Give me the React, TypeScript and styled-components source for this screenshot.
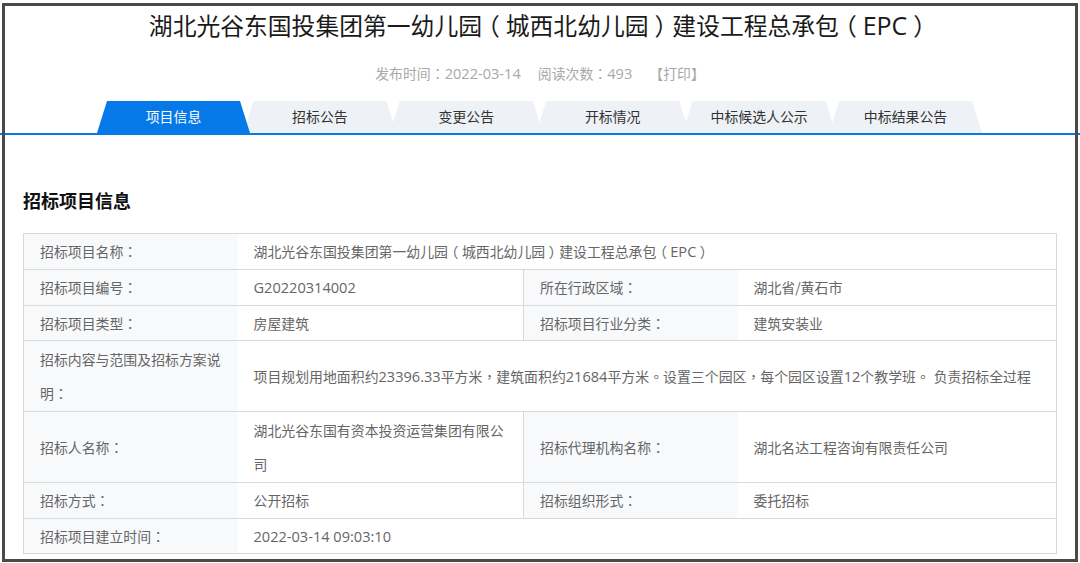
import React from "react";
import styled, { createGlobalStyle } from "styled-components";

const Global = createGlobalStyle`
  html, body { margin: 0; padding: 0; background: #fff; }
  body { width: 1080px; height: 563px; overflow: hidden; font-family: "Noto Sans CJK SC", "Liberation Sans", sans-serif; }
`;

const Frame = styled.div`
  box-sizing: border-box;
  width: 1076px;
  height: 559px;
  margin: 3px 0 0 2px;
  border: 3px solid #4a4a4a;
  background: #fff;
  position: relative;
  &::before,
  &::after {
    content: "";
    position: absolute;
    top: 127px;
    width: 2px;
    height: 2px;
    background: #0679e8;
  }
  &::before {
    left: -5px;
  }
  &::after {
    right: -5px;
  }
`;

const Title = styled.h1`
  margin: 0;
  height: 43px;
  line-height: 38px;
  font-size: 23.8px;
  font-weight: 400;
  color: #1a1a1a;
  text-align: center;
  white-space: nowrap;
`;

const Meta = styled.div`
  display: flex;
  justify-content: center;
  gap: 17px;
  height: 52px;
  padding-top: 12px;
  box-sizing: border-box;
  font-size: 13.9px;
  line-height: 24px;
  color: #a8a8a8;
`;

const TabBar = styled.nav`
  display: flex;
  height: 32px;
  padding-left: 92px;
  box-shadow: 0 2px 0 #0679e8;
`;

const Tab = styled.a<{ $active?: boolean }>`
  flex: none;
  width: 153px;
  margin-right: -6.6px;
  height: 32px;
  line-height: 31px;
  text-align: center;
  font-size: 13.9px;
  color: ${(p) => (p.$active ? "#fff" : "#333")};
  background: ${(p) => (p.$active ? "#0679e8" : "#eef1f5")};
  clip-path: polygon(10px 0, 143px 0, 153px 100%, 0 100%);
  position: relative;
  z-index: ${(p) => (p.$active ? 1 : 0)};
`;

const Section = styled.h2`
  margin: 0;
  padding: 44px 0 0 18px;
  height: 100px;
  box-sizing: border-box;
  font-size: 18px;
  line-height: 46px;
  font-weight: 700;
  color: #111;
`;

const Table = styled.table`
  margin-left: 18px;
  width: 1034px;
  border-collapse: collapse;
  table-layout: fixed;
  font-size: 13.9px;
  color: #666;
`;

const Row = styled.tr<{ $h: number }>`
  height: ${(p) => p.$h}px;
`;

const Label = styled.th<{ $tall?: boolean }>`
  box-sizing: border-box;
  border: 1px solid #d9d9d9;
  border-right: none;
  padding: 0 16px;
  background: #f8f9fb;
  font-weight: 400;
  text-align: left;
  line-height: ${(p) => (p.$tall ? 34.5 : 33)}px;
`;

const Value = styled.td<{ $tall?: boolean }>`
  box-sizing: border-box;
  border: 1px solid #d9d9d9;
  border-left: none;
  padding: 0 15px 0 16px;
  line-height: ${(p) => (p.$tall ? 34.5 : 33)}px;
`;

const Latin = styled.span`
  font-family: "Open Sans", "Liberation Sans", sans-serif;
  font-size: 1.05em;
`;

const Punct = styled.span`
  font-family: "Noto Sans CJK TC", sans-serif;
`;

const Paren = styled.span`
  padding: 0 0.25em;
  font-feature-settings: "halt";
`;

function Txt({ children }: { children: string }) {
  const parts = children.match(/[A-Za-z0-9.:\- ]+|[：，。]|（|）|[^A-Za-z0-9.:\- ：，。（）]+/g) ?? [];
  return (
    <>
      {parts.map((s, i) => {
        if (s === "（" || s === "）") return <Paren key={i}>{s}</Paren>;
        if (/^[：，。]$/.test(s)) return <Punct key={i}>{s}</Punct>;
        if (/^[A-Za-z0-9.:\- ]+$/.test(s)) return <Latin key={i}>{s}</Latin>;
        return <React.Fragment key={i}>{s}</React.Fragment>;
      })}
    </>
  );
}

const TITLE = "湖北光谷东国投集团第一幼儿园（城西北幼儿园）建设工程总承包（EPC）";

export default function App() {
  return (
    <Frame>
      <Global />
      <Title><Txt>{TITLE}</Txt></Title>
      <Meta>
        <span><Txt>发布时间：2022-03-14</Txt></span>
        <span><Txt>阅读次数：493</Txt></span>
        <span>【打印】</span>
      </Meta>
      <TabBar>
        <Tab $active>项目信息</Tab>
        <Tab>招标公告</Tab>
        <Tab>变更公告</Tab>
        <Tab>开标情况</Tab>
        <Tab>中标候选人公示</Tab>
        <Tab>中标结果公告</Tab>
      </TabBar>
      <Section>招标项目信息</Section>
      <Table>
        <colgroup>
          <col style={{ width: 214 }} />
          <col style={{ width: 286 }} />
          <col style={{ width: 214 }} />
          <col />
        </colgroup>
        <tbody>
          <Row $h={36}>
            <Label><Txt>招标项目名称：</Txt></Label>
            <Value colSpan={3}><Txt>{TITLE}</Txt></Value>
          </Row>
          <Row $h={36}>
            <Label><Txt>招标项目编号：</Txt></Label>
            <Value><Txt>G20220314002</Txt></Value>
            <Label><Txt>所在行政区域：</Txt></Label>
            <Value>湖北省/黄石市</Value>
          </Row>
          <Row $h={35}>
            <Label><Txt>招标项目类型：</Txt></Label>
            <Value>房屋建筑</Value>
            <Label><Txt>招标项目行业分类：</Txt></Label>
            <Value>建筑安装业</Value>
          </Row>
          <Row $h={71}>
            <Label $tall>
              招标内容与范围及招标方案说
              <br />
              <Txt>明：</Txt>
            </Label>
            <Value colSpan={3}><Txt>项目规划用地面积约23396.33平方米，建筑面积约21684平方米。设置三个园区，每个园区设置12个教学班。 负责招标全过程</Txt></Value>
          </Row>
          <Row $h={71}>
            <Label><Txt>招标人名称：</Txt></Label>
            <Value $tall>湖北光谷东国有资本投资运营集团有限公司</Value>
            <Label><Txt>招标代理机构名称：</Txt></Label>
            <Value>湖北名达工程咨询有限责任公司</Value>
          </Row>
          <Row $h={36}>
            <Label><Txt>招标方式：</Txt></Label>
            <Value>公开招标</Value>
            <Label><Txt>招标组织形式：</Txt></Label>
            <Value>委托招标</Value>
          </Row>
          <Row $h={35}>
            <Label><Txt>招标项目建立时间：</Txt></Label>
            <Value colSpan={3}><Txt>2022-03-14 09:03:10</Txt></Value>
          </Row>
        </tbody>
      </Table>
    </Frame>
  );
}
